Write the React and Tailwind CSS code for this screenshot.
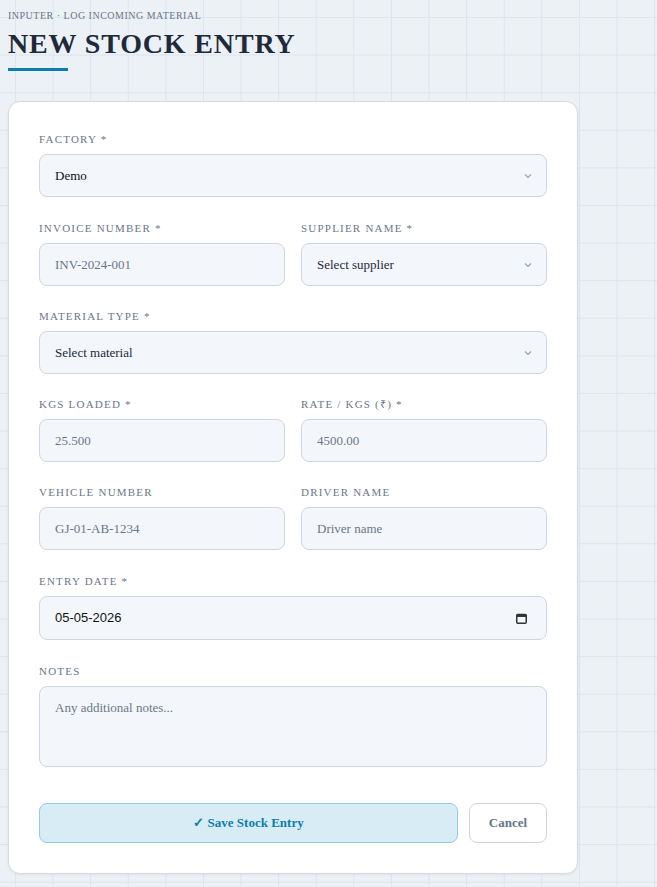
import { useState } from 'react';

const Label = ({ children }) => (
  <label className="block mb-2 text-[11px] leading-[14px] tracking-[0.11em] uppercase text-[#6b7689]">
    {children}
  </label>
);

const fieldCls =
  'w-full h-[43px] rounded-lg border border-[#cdd6e1] bg-[#f3f6fa] px-[15px] text-[13px] text-[#1e293b] placeholder:text-[#6b7689] outline-none';

const Chevron = () => (
  <svg
    className="pointer-events-none absolute right-[15px] top-1/2 -translate-y-1/2"
    width="8"
    height="5"
    viewBox="0 0 8 5"
    fill="none"
  >
    <path d="M1 1l3 3 3-3" stroke="#94a3b8" strokeWidth="1.2" />
  </svg>
);

const Select = ({ value, onChange, options, placeholder }) => (
  <div className="relative">
    <select
      value={value}
      onChange={e => onChange(e.target.value)}
      className={`${fieldCls} appearance-none ${value ? 'text-[#111]' : ''}`}
    >
      {placeholder && <option value="">{placeholder}</option>}
      {options.map(o => (
        <option key={o} value={o}>{o}</option>
      ))}
    </select>
    <Chevron />
  </div>
);

const NewStockEntry = () => {
  const [factory, setFactory] = useState('Demo');
  const [supplier, setSupplier] = useState('');
  const [material, setMaterial] = useState('');

  return (
    <div className="min-h-screen bg-[#ecf1f5] [background-image:linear-gradient(to_right,#dae6f0_1px,transparent_1px),linear-gradient(to_bottom,#dae6f0_1px,transparent_1px)] [background-size:37.6px_37.6px] [background-position:15px_17px] px-2 pb-[14px] font-['Liberation_Serif',serif]">
      <p className="pt-[9px] text-[10px] leading-[14px] tracking-[0.05em] uppercase text-[#6b7689]">
        Inputer · Log incoming material
      </p>
      <h1 className="mt-[5px] text-[28px] leading-[32px] font-bold tracking-[0.03em] text-[#1e293b]">
        NEW STOCK ENTRY
      </h1>
      <div className="mt-2 h-[3px] w-[60px] bg-[#0e7fab]" />

      <div className="mt-[30px] w-[570px] rounded-xl border border-[#d3dbe4] bg-white p-[30px] shadow-[0_1px_3px_rgba(15,23,42,0.06)]">
        <div>
          <Label>Factory *</Label>
          <Select value={factory} onChange={setFactory} options={['Demo']} />
        </div>

        <div className="mt-6 grid grid-cols-2 gap-x-4">
          <div>
            <Label>Invoice Number *</Label>
            <input className={fieldCls} placeholder="INV-2024-001" />
          </div>
          <div>
            <Label>Supplier Name *</Label>
            <Select value={supplier} onChange={setSupplier} options={[]} placeholder="Select supplier" />
          </div>
        </div>

        <div className="mt-[23px]">
          <Label>Material Type *</Label>
          <Select value={material} onChange={setMaterial} options={[]} placeholder="Select material" />
        </div>

        <div className="mt-[23px] grid grid-cols-2 gap-x-4">
          <div>
            <Label>KGS Loaded *</Label>
            <input className={fieldCls} placeholder="25.500" />
          </div>
          <div>
            <Label>Rate / KGS (₹) *</Label>
            <input className={fieldCls} placeholder="4500.00" />
          </div>
        </div>

        <div className="mt-[23px] grid grid-cols-2 gap-x-4">
          <div>
            <Label>Vehicle Number</Label>
            <input className={fieldCls} placeholder="GJ-01-AB-1234" />
          </div>
          <div>
            <Label>Driver Name</Label>
            <input className={fieldCls} placeholder="Driver name" />
          </div>
        </div>

        <div className="mt-6">
          <Label>Entry Date *</Label>
          <div className="flex h-[44px] w-full items-center justify-between rounded-lg border border-[#cdd6e1] bg-[#f3f6fa] pl-[15px] pr-[19px]">
            <input
              readOnly
              value="05-05-2026"
              className="w-40 bg-transparent text-[13px] text-[#111] outline-none font-['Liberation_Sans',sans-serif]"
            />
            <svg width="11" height="11" viewBox="0 0 11 11" fill="none">
              <rect x="0.75" y="1.5" width="9.5" height="8.75" rx="1" stroke="#333" strokeWidth="1.5" />
              <rect x="0.75" y="1.5" width="9.5" height="2.5" fill="#333" />
            </svg>
          </div>
        </div>

        <div className="mt-6">
          <Label>Notes</Label>
          <textarea
            className="block h-[81px] w-full resize-none rounded-lg border border-[#cdd6e1] bg-[#f3f6fa] px-[15px] py-[11px] text-[13px] text-[#1e293b] placeholder:text-[#6b7689] outline-none"
            placeholder="Any additional notes..."
          />
        </div>

        <div className="mt-9 flex gap-[11px]">
          <button className="h-10 flex-1 rounded-lg border border-[#93cbe0] bg-[#d8ecf5] text-[13px] font-bold text-[#0b7fab]">
            ✓ Save Stock Entry
          </button>
          <button className="h-10 w-[78px] rounded-lg border border-[#cbd5e1] bg-white text-[13px] font-bold text-[#64748b]">
            Cancel
          </button>
        </div>
      </div>
    </div>
  );
};

export default function App() {
  return <NewStockEntry />;
}
